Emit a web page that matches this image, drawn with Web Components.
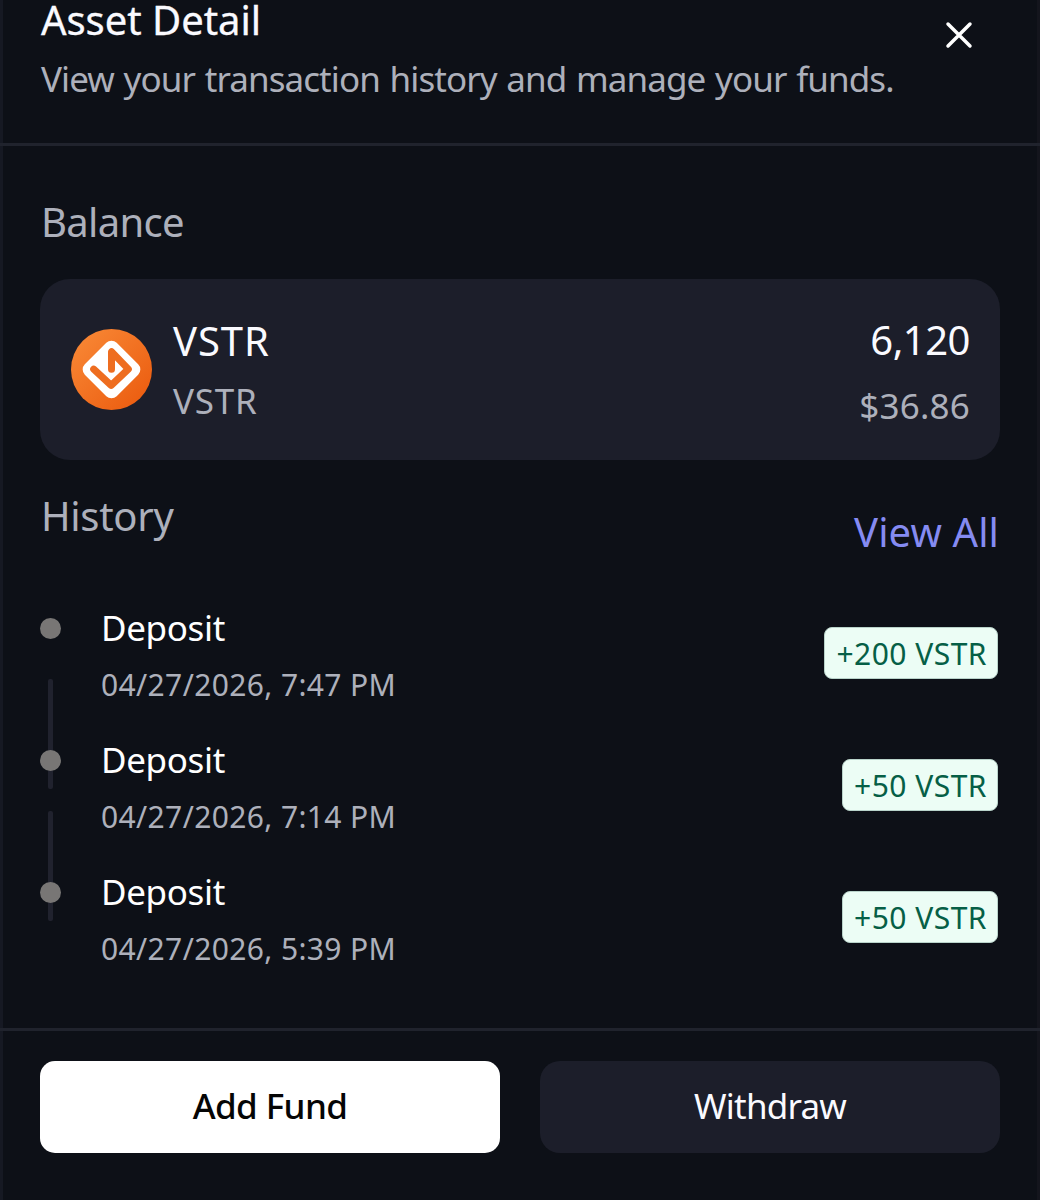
<!DOCTYPE html>
<html lang="en">
<head>
<meta charset="utf-8">
<title>Asset Detail</title>
<style>
  html, body {
    margin: 0;
    height: 100%;
    background: #0d1017;
  }
  body {
    overflow: hidden;
    font-family: "Noto Sans", "Open Sans", sans-serif;
  }
</style>
</head>
<body>
<asset-panel>
  <panel-header slot="header">
    <span slot="title">Asset Detail</span>
    <span slot="description">View your transaction history and manage your funds.</span>
  </panel-header>

  <section-title>Balance</section-title>
  <balance-card symbol="VSTR" name="VSTR" amount="6,120" value="$36.86">
    <token-logo slot="logo"></token-logo>
  </balance-card>

  <section-title class="history">History<a slot="action">View All</a></section-title>
  <history-list>
    <history-item amount="+200 VSTR" date="04/27/2026, 7:47 PM">Deposit</history-item>
    <history-item amount="+50 VSTR" date="04/27/2026, 7:14 PM">Deposit</history-item>
    <history-item amount="+50 VSTR" date="04/27/2026, 5:39 PM" last>Deposit</history-item>
  </history-list>

  <panel-button slot="footer" variant="primary">Add Fund</panel-button>
  <panel-button slot="footer">Withdraw</panel-button>
</asset-panel>

<script>
  function define(name, html, render) {
    customElements.define(name, class extends HTMLElement {
      constructor() {
        super();
        this.attachShadow({ mode: 'open' });
      }
      connectedCallback() {
        this.shadowRoot.innerHTML = html;
        if (render) render(this, this.shadowRoot);
      }
    });
  }

  // copy attributes of the host into the matching [data-text] nodes
  function fillText(host, root) {
    root.querySelectorAll('[data-text]').forEach(el => {
      el.textContent = host.getAttribute(el.dataset.text) || '';
    });
  }

  define('asset-panel', `
<style>
:host {
  --surface: #1c1e2a;
  --line: #20232d;
  --muted: #adb0bb;
  --text: #fafaff;
  display: flex;
  flex-direction: column;
  height: 1200px;
  box-sizing: border-box;
  color: var(--text);
  white-space: nowrap;
  box-shadow: inset 3px 0 #161923, inset -3px 0 #14151d;
}
main {
  flex: 1;
  padding: 46px 40px 0;
}
footer {
  display: flex;
  gap: 40px;
  height: 172px;
  box-sizing: border-box;
  padding: 30px 40px 47px;
  border-top: 3px solid var(--line);
}
</style>
<slot name="header"></slot>
<main><slot></slot></main>
<footer><slot name="footer"></slot></footer>
  `);

  define('panel-header', `
<style>
:host {
  display: flex;
  justify-content: space-between;
  height: 143px;
  padding: 0 59px 0 41px;
  border-bottom: 3px solid var(--line);
}
h2, p {
  margin: 0;
  font-weight: 400;
}
h2 {
  font-size: 40px;
  line-height: 39px;
  letter-spacing: -.05px;
  -webkit-text-stroke: .3px;
}
p {
  margin-top: 15px;
  font-size: 35px;
  line-height: 50px;
  letter-spacing: -.92px;
  word-spacing: 1.5px;
  color: var(--muted);
}
button {
  all: unset;
  width: 44px;
  height: 44px;
  margin-top: 13px;
}
svg {
  display: block;
}
</style>
<div>
  <h2><slot name="title"></slot></h2>
  <p><slot name="description"></slot></p>
</div>
<button aria-label="Close">
  <svg width="44" height="44" viewBox="0 0 24 24" fill="none" stroke="#fff" stroke-width="1.9" stroke-linecap="round"><path d="M18 6 6 18M6 6l12 12"/></svg>
</button>
  `);

  define('section-title', `
<style>
:host {
  display: flex;
  justify-content: space-between;
  align-items: flex-start;
  padding: 0 1px;
  font-size: 40px;
  line-height: 59px;
  letter-spacing: -.7px;
  color: var(--muted);
}
:host(.history) {
  margin-top: 28px;
  line-height: 56px;
  letter-spacing: -.3px;
}
::slotted(a) {
  line-height: 87px;
  letter-spacing: .1px;
  color: #858bf2;
}
</style>
<span><slot></slot></span>
<slot name="action"></slot>
  `);

  define('token-logo', `
<style>
:host, svg {
  display: block;
  width: 81px;
  height: 81px;
}
</style>
<svg viewBox="28 27 243 243">
  <defs>
    <linearGradient id="g" x1="0" y1="0" x2="1" y2="1">
      <stop offset="0" stop-color="#f98b38"/>
      <stop offset="1" stop-color="#ea580c"/>
    </linearGradient>
  </defs>
  <circle cx="149.500" cy="148.500" r="121.500" fill="url(#g)"/>
  <path d="M149.500 84 214 148.500 149.500 213 85 148.500Z" fill="#fff" stroke="#fff" stroke-width="44" stroke-linejoin="round"/>
  <path d="M96 147.500 148.500 196 200 147.500 149.500 95V148" fill="none" stroke="#ee6d20" stroke-width="21" stroke-linecap="round" stroke-linejoin="round"/>
</svg>
  `);

  define('balance-card', `
<style>
:host {
  display: flex;
  align-items: center;
  height: 181px;
  margin-top: 28px;
  padding: 0 30px 0 31px;
  border-radius: 30px;
  background: var(--surface);
}
.name {
  margin-left: 21px;
  padding-top: 1px;
}
.amount {
  margin-left: auto;
  padding-top: 6px;
  text-align: right;
}
.top {
  font-size: 40px;
  line-height: 61px;
}
.sub {
  font-size: 35px;
  line-height: 60px;
  color: var(--muted);
}
.name .top { letter-spacing: .9px; }
.name .sub { letter-spacing: .8px; }
.amount div { line-height: 66px; }
.amount .top { letter-spacing: -.5px; }
.amount .sub { letter-spacing: .2px; }
</style>
<slot name="logo"></slot>
<div class="name">
  <div class="top" data-text="symbol"></div>
  <div class="sub" data-text="name"></div>
</div>
<div class="amount">
  <div class="top" data-text="amount"></div>
  <div class="sub" data-text="value"></div>
</div>
  `, fillText);

  define('history-list', `
<style>
:host {
  display: grid;
  gap: 18px;
  margin-top: 24px;
}
</style>
<slot></slot>
  `);

  define('history-item', `
<style>
:host {
  position: relative;
  display: flex;
  align-items: flex-start;
  height: 114px;
}
.dot {
  position: relative;
  z-index: 1;
  width: 21px;
  height: 21px;
  margin: 19px 40px 0 0;
  border-radius: 50%;
  background: #787675;
}
/* runs from under this dot to just past the next one */
.line {
  position: absolute;
  left: 8px;
  top: 80px;
  width: 5px;
  height: 110px;
  border-radius: 2px;
  background: #20222e;
}
:host([last]) .line {
  display: none;
}
.label {
  padding-top: 1px;
  font-size: 35px;
  line-height: 55px;
  letter-spacing: -.35px;
  color: #fff;
}
.date {
  font-size: 30px;
  line-height: 59px;
  letter-spacing: .37px;
  color: var(--muted);
}
.badge {
  box-sizing: border-box;
  height: 52px;
  margin: 28px 2px 0 auto;
  padding: 1px 10px 0 11px;
  border: 1px solid #b9d3ca;
  border-radius: 8px;
  font-size: 30px;
  line-height: 50px;
  letter-spacing: .48px;
  background: #ecfdf5;
  color: #065f46;
}
</style>
<span class="line"></span>
<span class="dot"></span>
<div>
  <div class="label"><slot></slot></div>
  <div class="date" data-text="date"></div>
</div>
<span class="badge" data-text="amount"></span>
  `, fillText);

  define('panel-button', `
<style>
:host {
  flex: 1;
  height: 92px;
  border-radius: 20px;
  background: var(--surface);
  font-size: 35px;
  line-height: 90px;
  letter-spacing: -.8px;
  text-align: center;
}
:host([variant="primary"]) {
  border-radius: 15px;
  background: #fff;
  color: #050505;
  font-weight: 500;
  letter-spacing: -.6px;
}
</style>
<slot></slot>
  `);
</script>
</body>
</html>
